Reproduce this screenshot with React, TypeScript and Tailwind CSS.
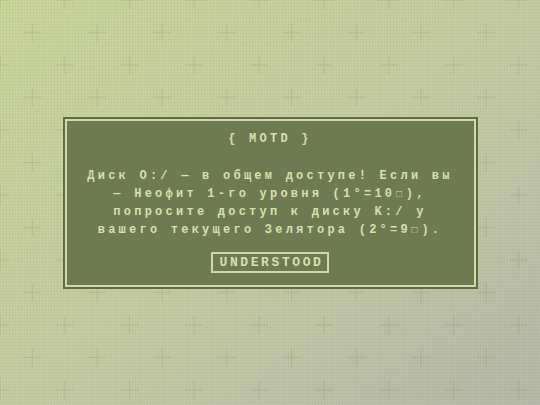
import React from 'react'

function Backdrop() {
  return (
    <svg className="absolute inset-0 h-full w-full" aria-hidden="true">
      <defs>
        <pattern id="mesh" width="3" height="3" patternUnits="userSpaceOnUse">
          <path d="M0 0.5H3M0.5 0V3" stroke="#5a6438" strokeOpacity="0.05" strokeWidth="1" />
        </pattern>
        <pattern id="plus" width="64.8" height="65" patternUnits="userSpaceOnUse">
          <g stroke="#6c7548" strokeOpacity="0.14" strokeWidth="1.5">
            <path d="M-9 0H9M0 -9V9" />
            <path d="M55.8 0H73.8M64.8 -9V9" />
            <path d="M-9 65H9M0 56V74" />
            <path d="M55.8 65H73.8M64.8 56V74" />
            <path d="M23.4 32.5H41.4M32.4 23.5V41.5" />
          </g>
        </pattern>
      </defs>
      <rect width="100%" height="100%" fill="url(#mesh)" />
      <rect width="100%" height="100%" fill="url(#plus)" />
    </svg>
  )
}

// small square used in A∴A∴ grade notation, kept on the mono grid
function Sq() {
  return (
    <span className="inline-block w-[10.44px] pr-[3.24px] text-center text-[10px] leading-none tracking-normal">□</span>
  )
}

export default function App() {
  return (
    <div className="relative flex h-[405px] w-[540px] items-center justify-center overflow-hidden bg-linear-to-br from-[#cad69a] via-[#c5cca4] to-[#b6baa9] font-['Liberation_Mono',monospace]">
      <Backdrop />

      <div className="relative w-[415px] border-2 border-[#5f6c45]">
        <div className="flex flex-col items-center border-2 border-[#d2d9a8] bg-[#6e7b52] pt-[9px] pb-[12px] text-[#d8dfb1]">
          <div className="text-[12px] leading-[18px] font-bold tracking-[0.27em]">{'{ MOTD }'}</div>

          <p className="mt-[19px] whitespace-nowrap text-center text-[12px] leading-[18px] font-bold tracking-[0.27em]">
            Диск O:/ — в общем доступе! Если вы
            <br />
            — Неофит 1-го уровня (1°=10<Sq />),
            <br />
            попросите доступ к диску K:/ у
            <br />
            вашего текущего Зелятора (2°=9<Sq />).
          </p>

          <button className="mt-[13px] flex h-[21px] w-[118px] items-center justify-center border-2 border-[#d2d9a8] pl-[3px] text-[13px] leading-none font-bold tracking-[0.2em] text-[#d8dfb1]">
            UNDERSTOOD
          </button>
        </div>
      </div>
    </div>
  )
}
